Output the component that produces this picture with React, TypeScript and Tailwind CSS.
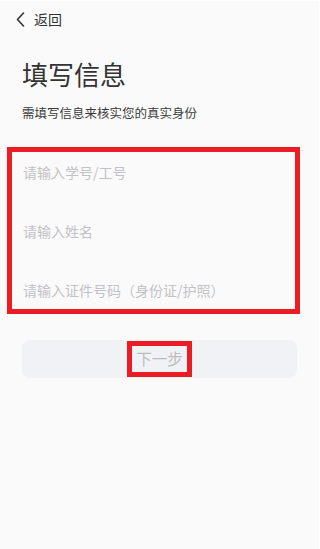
import { useState } from 'react'

const fields = ['请输入学号/工号', '请输入姓名', '请输入证件号码（身份证/护照）']

export default function App() {
  const [values, setValues] = useState<string[]>(['', '', ''])

  return (
    <div
      className="w-[320px] h-[549px] bg-[#fafafa] text-[#333] border-t border-r border-white overflow-hidden"
      style={{ fontFamily: '"Noto Sans CJK SC", "Noto Sans", sans-serif' }}
    >
      {/* Header */}
      <div className="flex items-center h-[36px] pl-[16px]">
        <svg width="9" height="15" viewBox="0 0 9 15" fill="none" className="mr-[9px]">
          <path d="M7.5 1 L1.5 7.5 L7.5 14" stroke="#333" strokeWidth="1.6" strokeLinecap="round" strokeLinejoin="round" />
        </svg>
        <span className="text-[14px] leading-none">返回</span>
      </div>

      {/* Title */}
      <div className="px-[22px] pt-[20px]">
        <h1 className="text-[26px] leading-[34px] font-normal">填写信息</h1>
        <p className="text-[12.5px] leading-[18px] mt-[13px] text-[#3a3a3a]">需填写信息来核实您的真实身份</p>
      </div>

      {/* Form */}
      <div className="mt-[25px] ml-[7px] w-[293px] border-[5px] border-[#ec1c24] pl-[11px] pr-[8px] flex flex-col gap-[20px]">
        {fields.map((f, i) => (
          <input
            key={f}
            value={values[i]}
            onChange={e => setValues(v => v.map((x, j) => (j === i ? e.target.value : x)))}
            placeholder={f}
            className="h-[39px] bg-transparent outline-none text-[14px] text-[#333] placeholder:text-[#c2c2c6]"
          />
        ))}
      </div>

      {/* Next */}
      <div className="mt-[26px] mx-[22px] h-[38px] rounded-lg bg-[#f1f2f6] flex items-center justify-center">
        <button className="w-[65px] h-[36px] border-[5px] border-[#ec1c24] text-[15.5px] text-[#bdbdbd] flex items-center justify-center">
          下一步
        </button>
      </div>
    </div>
  )
}
